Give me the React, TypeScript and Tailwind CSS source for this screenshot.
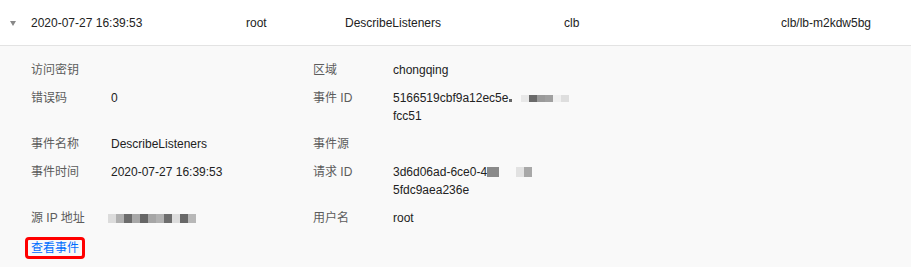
import type { ReactNode } from 'react'

const font = { fontFamily: '"Liberation Sans", "Noto Sans CJK SC", sans-serif' }

/** Pixelated blur blocks that stand in for masked values. */
function Mosaic({ cells, className }: { cells: string[]; className?: string }) {
  return (
    <span className={`inline-flex h-[7px] align-middle ${className ?? ''}`}>
      {cells.map((c, i) => (
        // biome-ignore lint: static list
        <span key={i} className="h-full w-[8px]" style={{ background: c }} />
      ))}
    </span>
  )
}

function Field({ label, children }: { label: string; children?: ReactNode }) {
  return (
    <div className="flex">
      <div className="w-[80px] shrink-0 text-[#5c5c5c]">{label}</div>
      <div className="w-[190px] text-[#222]">{children}</div>
    </div>
  )
}

export default function App() {
  return (
    <div className="w-[911px] h-[267px] overflow-hidden bg-white text-[12px] leading-[18px]" style={font}>
      <div className="flex h-[46px] items-center border-b border-[#e3e3e3] pt-[1px] text-[#222]">
        <div className="flex w-[31px] pl-[10px]">
          <span className="h-0 w-0 border-x-[3.5px] border-t-[5px] border-x-transparent border-t-[#888]" />
        </div>
        <div className="w-[215px]">2020-07-27 16:39:53</div>
        <div className="w-[99px]">root</div>
        <div className="w-[219px]">DescribeListeners</div>
        <div className="w-[217px]">clb</div>
        <div>clb/lb-m2kdw5bg</div>
      </div>
      <div className="bg-[#f9f9f9] px-[31px] pt-[15px] pb-6">
        <div className="grid grid-cols-[282px_1fr] gap-y-[10px]">
          <Field label="访问密钥" />
          <Field label="区域">chongqing</Field>
          <Field label="错误码">0</Field>
          <Field label="事件 ID">
            <div className="flex items-center">
              <span>5166519cbf9a12ec5e</span>
              <span className="ml-[1px] mt-[4px] h-[3px] w-[3px] bg-[#666]" />
              <Mosaic className="ml-[9px]" cells={['#e8e8e8', '#6a6a6a', '#9a9a9a', '#a0a0a0', '#f0f0f0', '#dedede']} />
            </div>
            <div>fcc51</div>
          </Field>
          <Field label="事件名称">DescribeListeners</Field>
          <Field label="事件源" />
          <Field label="事件时间">2020-07-27 16:39:53</Field>
          <Field label="请求 ID">
            <div className="flex items-center">
              <span>3d6d06ad-6ce0-4</span>
              <span className="h-[10px] w-[12px] bg-[#8a8a8a]" />
              <Mosaic className="ml-[17px] h-[10px]" cells={['#e2e2e2', '#a8a8a8']} />
            </div>
            <div>5fdc9aea236e</div>
          </Field>
          <Field label="源 IP 地址">
            <Mosaic
              className="-ml-[3px] h-[9px]"
              cells={['#dcdcdc', '#b0b0b0', '#6c6c6c', '#a8a8a8', '#666666', '#a6a6a6', '#b2b2b2', '#6e6e6e', '#dddddd', '#686868', '#b8b8b8']}
            />
          </Field>
          <Field label="用户名">root</Field>
          <div>
            <span className="-ml-[6px] inline-block rounded-[4px] border-[3px] border-[#ff0000] px-[3px] leading-[16px] text-[#006eff]">
              查看事件
            </span>
          </div>
        </div>
      </div>
    </div>
  )
}
